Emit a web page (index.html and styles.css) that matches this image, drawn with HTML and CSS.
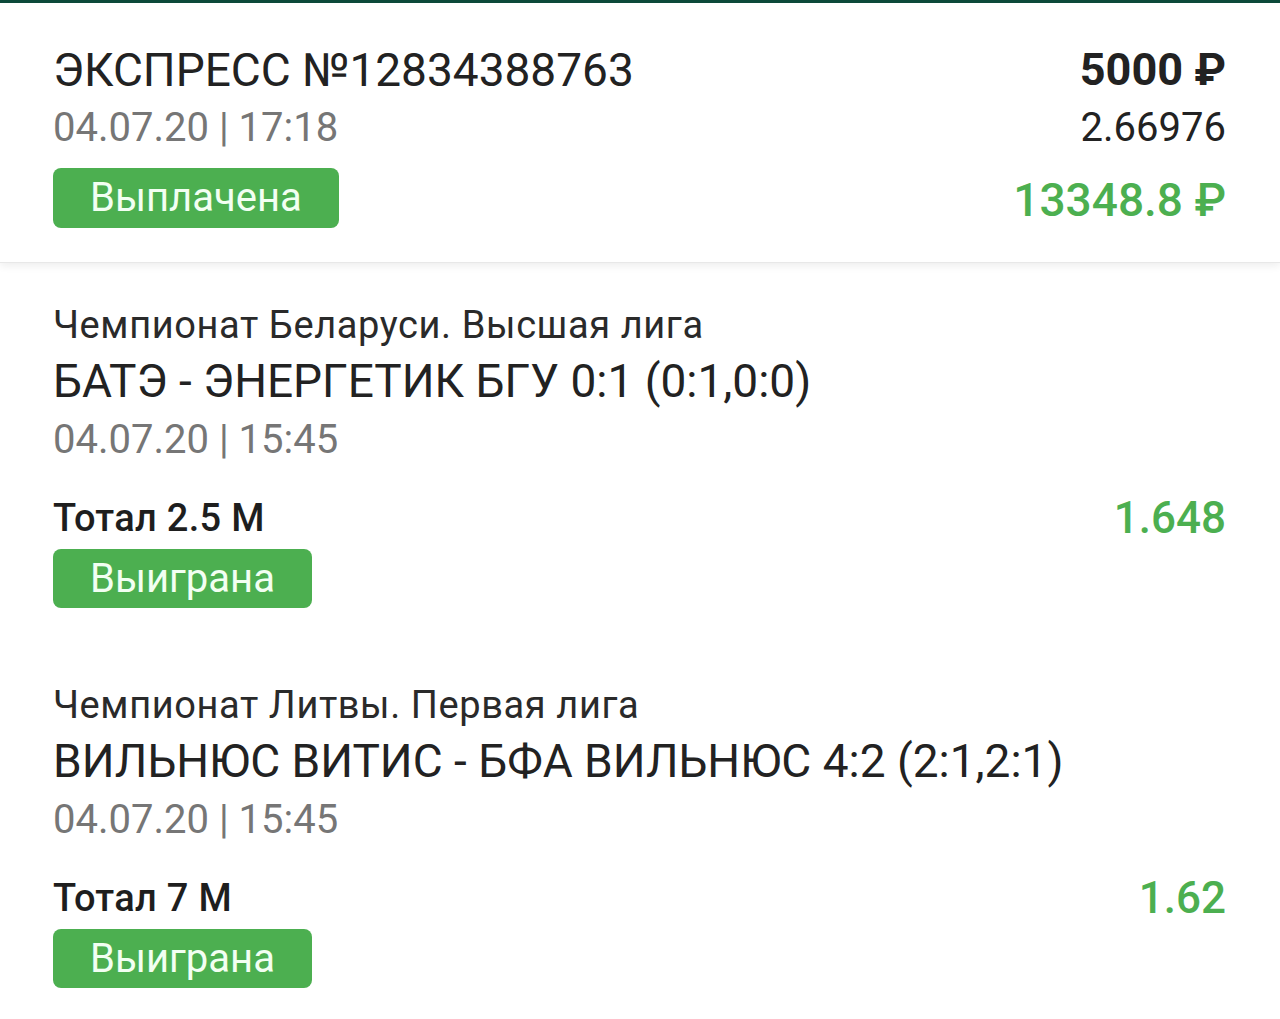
FILE: index.html
```html
<!DOCTYPE html>
<html lang="ru">
<head>
<meta charset="utf-8">
<title>Экспресс</title>
<link rel="stylesheet" href="styles.css">
</head>
<body>
<div class="topbar"></div>
<header class="summary">
  <div class="summary-left">
    <div class="title">ЭКСПРЕСС №12834388763</div>
    <div class="date">04.07.20 | 17:18</div>
    <div class="badge">Выплачена</div>
  </div>
  <div class="summary-right">
    <div class="stake">5000 ₽</div>
    <div class="odds">2.66976</div>
    <div class="payout">13348.8 ₽</div>
  </div>
</header>
<main class="bets">
  <section class="bet">
    <div class="league">Чемпионат Беларуси. Высшая лига</div>
    <div class="match">БАТЭ - ЭНЕРГЕТИК БГУ 0:1 (0:1,0:0)</div>
    <div class="date">04.07.20 | 15:45</div>
    <div class="outcome-row">
      <div class="outcome">Тотал 2.5 М</div>
      <div class="coef">1.648</div>
    </div>
    <div class="badge badge-small">Выиграна</div>
  </section>
  <section class="bet">
    <div class="league">Чемпионат Литвы. Первая лига</div>
    <div class="match">ВИЛЬНЮС ВИТИС - БФА ВИЛЬНЮС 4:2 (2:1,2:1)</div>
    <div class="date">04.07.20 | 15:45</div>
    <div class="outcome-row">
      <div class="outcome">Тотал 7 М</div>
      <div class="coef">1.62</div>
    </div>
    <div class="badge badge-small">Выиграна</div>
  </section>
</main>
</body>
</html>
```
FILE: styles.css
```css
* { box-sizing: border-box; }
html, body {
  margin: 0;
  padding: 0;
  background: #ffffff;
}
body {
  font-family: Roboto, "Noto Sans", "Liberation Sans", sans-serif;
  color: #212121;
  width: 1280px;
  overflow: hidden;
}
.topbar {
  height: 3px;
  background: #0d4a3b;
}
.summary {
  display: flex;
  justify-content: space-between;
  padding: 39px 54px 34px 53px;
  background: #fff;
  box-shadow: 0 3px 8px rgba(0, 0, 0, 0.07);
  border-bottom: 1px solid #e8e8e8;
  position: relative;
}
.summary-left, .summary-right {
  display: flex;
  flex-direction: column;
}
.summary-left { align-items: flex-start; }
.summary-right { align-items: flex-end; }
.title {
  font-size: 46px;
  line-height: 56px;
  color: #222;
}
.date {
  font-size: 40px;
  line-height: 60px;
  color: #767676;
}
.badge {
  margin-top: 10px;
  height: 60px;
  line-height: 60px;
  padding: 0 37px;
  border-radius: 8px;
  background: #4caf50;
  color: #f2fff2;
  font-size: 40px;
}
.stake {
  font-size: 45px;
  line-height: 56px;
  font-weight: 700;
  color: #222;
}
.odds {
  font-size: 40px;
  line-height: 60px;
  color: #222;
}
.payout {
  margin-top: 14px;
  font-size: 46px;
  line-height: 56px;
  font-weight: 500;
  color: #4caf50;
}
.bet {
  padding: 37px 54px 35px 53px;
}
.league {
  font-size: 38px;
  line-height: 50px;
  letter-spacing: 0.6px;
  color: #2a2a2a;
}
.match {
  font-size: 46px;
  line-height: 62px;
  color: #222;
}
.bet .date {
  line-height: 56px;
}
.outcome-row {
  margin-top: 25px;
  display: flex;
  justify-content: space-between;
  align-items: center;
  height: 50px;
}
.outcome {
  font-size: 38px;
  font-weight: 500;
  letter-spacing: 0.3px;
  color: #1e1e1e;
}
.coef {
  font-size: 44px;
  font-weight: 500;
  color: #4caf50;
}
.badge-small {
  display: inline-block;
  margin-top: 6px;
  height: 59px;
  line-height: 59px;
}
```
